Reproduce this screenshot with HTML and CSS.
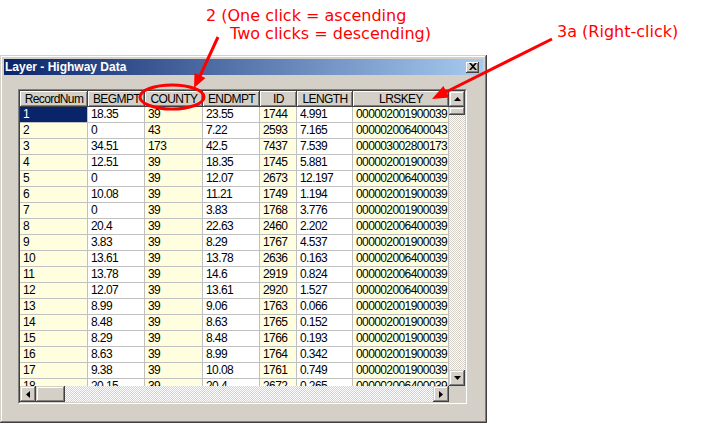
FILE: index.html
```html
<!DOCTYPE html>
<html>
<head>
<meta charset="utf-8">
<link rel="stylesheet" href="styles.css">
</head>
<body>
<div class="stage">
  <div class="window">
    <div class="titlebar">
      <span class="title">Layer - Highway Data</span>
      <span class="close"><svg width="8" height="7" viewBox="0 0 8 7"><path d="M0 0h2l2 2 2-2h2L5 3.5 8 7H6L4 5 2 7H0l3-3.5z" fill="#000"/></svg></span>
    </div>
    <div class="client">
      <div class="grid">
        <div class="grid-in">
          <div class="top">
            <div class="data">
              <div class="row head">
                <div class="hc">RecordNum</div><div class="hc">BEGMPT</div><div class="hc">COUNTY</div><div class="hc">ENDMPT</div><div class="hc">ID</div><div class="hc">LENGTH</div><div class="hc">LRSKEY</div>
              </div>
              <div class="row"><div class="c y sel">1</div><div class="c">18.35</div><div class="c y">39</div><div class="c">23.55</div><div class="c y">1744</div><div class="c">4.991</div><div class="c y">000002001900039</div></div>
              <div class="row"><div class="c y">2</div><div class="c">0</div><div class="c y">43</div><div class="c">7.22</div><div class="c y">2593</div><div class="c">7.165</div><div class="c y">000002006400043</div></div>
              <div class="row"><div class="c y">3</div><div class="c">34.51</div><div class="c y">173</div><div class="c">42.5</div><div class="c y">7437</div><div class="c">7.539</div><div class="c y">000003002800173</div></div>
              <div class="row"><div class="c y">4</div><div class="c">12.51</div><div class="c y">39</div><div class="c">18.35</div><div class="c y">1745</div><div class="c">5.881</div><div class="c y">000002001900039</div></div>
              <div class="row"><div class="c y">5</div><div class="c">0</div><div class="c y">39</div><div class="c">12.07</div><div class="c y">2673</div><div class="c">12.197</div><div class="c y">000002006400039</div></div>
              <div class="row"><div class="c y">6</div><div class="c">10.08</div><div class="c y">39</div><div class="c">11.21</div><div class="c y">1749</div><div class="c">1.194</div><div class="c y">000002001900039</div></div>
              <div class="row"><div class="c y">7</div><div class="c">0</div><div class="c y">39</div><div class="c">3.83</div><div class="c y">1768</div><div class="c">3.776</div><div class="c y">000002001900039</div></div>
              <div class="row"><div class="c y">8</div><div class="c">20.4</div><div class="c y">39</div><div class="c">22.63</div><div class="c y">2460</div><div class="c">2.202</div><div class="c y">000002006400039</div></div>
              <div class="row"><div class="c y">9</div><div class="c">3.83</div><div class="c y">39</div><div class="c">8.29</div><div class="c y">1767</div><div class="c">4.537</div><div class="c y">000002001900039</div></div>
              <div class="row"><div class="c y">10</div><div class="c">13.61</div><div class="c y">39</div><div class="c">13.78</div><div class="c y">2636</div><div class="c">0.163</div><div class="c y">000002006400039</div></div>
              <div class="row"><div class="c y">11</div><div class="c">13.78</div><div class="c y">39</div><div class="c">14.6</div><div class="c y">2919</div><div class="c">0.824</div><div class="c y">000002006400039</div></div>
              <div class="row"><div class="c y">12</div><div class="c">12.07</div><div class="c y">39</div><div class="c">13.61</div><div class="c y">2920</div><div class="c">1.527</div><div class="c y">000002006400039</div></div>
              <div class="row"><div class="c y">13</div><div class="c">8.99</div><div class="c y">39</div><div class="c">9.06</div><div class="c y">1763</div><div class="c">0.066</div><div class="c y">000002001900039</div></div>
              <div class="row"><div class="c y">14</div><div class="c">8.48</div><div class="c y">39</div><div class="c">8.63</div><div class="c y">1765</div><div class="c">0.152</div><div class="c y">000002001900039</div></div>
              <div class="row"><div class="c y">15</div><div class="c">8.29</div><div class="c y">39</div><div class="c">8.48</div><div class="c y">1766</div><div class="c">0.193</div><div class="c y">000002001900039</div></div>
              <div class="row"><div class="c y">16</div><div class="c">8.63</div><div class="c y">39</div><div class="c">8.99</div><div class="c y">1764</div><div class="c">0.342</div><div class="c y">000002001900039</div></div>
              <div class="row"><div class="c y">17</div><div class="c">9.38</div><div class="c y">39</div><div class="c">10.08</div><div class="c y">1761</div><div class="c">0.749</div><div class="c y">000002001900039</div></div>
              <div class="row"><div class="c y">18</div><div class="c">20.15</div><div class="c y">39</div><div class="c">20.4</div><div class="c y">2672</div><div class="c">0.265</div><div class="c y">000002006400039</div></div>
            </div>
            <div class="vscroll">
              <div class="btn"><svg width="7" height="4" viewBox="0 0 7 4"><path d="M3.5 0L7 4H0z" fill="#000"/></svg></div>
              <div class="thumb-v"></div>
              <div class="track"></div>
              <div class="btn"><svg width="7" height="4" viewBox="0 0 7 4"><path d="M0 0h7L3.5 4z" fill="#000"/></svg></div>
            </div>
          </div>
          <div class="bottom">
            <div class="hscroll">
              <div class="btn"><svg width="4" height="7" viewBox="0 0 4 7"><path d="M4 0v7L0 3.5z" fill="#000"/></svg></div>
              <div class="thumb-h"></div>
              <div class="track"></div>
              <div class="btn"><svg width="4" height="7" viewBox="0 0 4 7"><path d="M0 0l4 3.5L0 7z" fill="#000"/></svg></div>
            </div>
            <div class="corner"></div>
          </div>
        </div>
      </div>
    </div>
  </div>

  <div class="overlay">
    <svg class="marks" width="703" height="424" viewBox="0 0 703 424">
      <ellipse cx="172" cy="97" rx="32" ry="12" fill="none" stroke="#ff0000" stroke-width="3"/>
      <line x1="218" y1="37" x2="200" y2="76" stroke="#ff0000" stroke-width="3"/>
      <polygon points="194,88 205.4,77.9 194.5,72.8" fill="#ff0000"/>
      <line x1="552" y1="39" x2="446" y2="92" stroke="#ff0000" stroke-width="3"/>
      <polygon points="432,99 449.2,97.6 443.4,86" fill="#ff0000"/>
    </svg>
    <div class="callout c1">
      <span class="l1">2 (One click = ascending</span>
      <span class="l2">Two clicks = descending)</span>
    </div>
    <div class="callout c2">3a (Right-click)</div>
  </div>
</div>
</body>
</html>
```

FILE: styles.css
```css
html, body {
  margin: 0;
  padding: 0;
  background: #ffffff;
}

.stage {
  position: relative;
  width: 703px;
  height: 424px;
  overflow: hidden;
  background: #ffffff;
  font-family: "Liberation Sans", Arial, sans-serif;
}

.window {
  box-sizing: border-box;
  width: 487px;
  height: 368px;
  margin-top: 55px;
  padding: 4px;
  background: #d4d0c8;
  box-shadow: inset -1px -1px #404040, inset 1px 1px #d4d0c8, inset -2px -2px #808080, inset 2px 2px #ffffff;
  display: flex;
  flex-direction: column;
}

.titlebar {
  height: 16px;
  flex: none;
  background: linear-gradient(to right, #0a246a, #a6caf0);
  display: flex;
  align-items: center;
  justify-content: space-between;
  padding: 0 4px 0 1px;
}

.title {
  color: #ffffff;
  font: bold 12px "Liberation Sans", Arial, sans-serif;
  line-height: 16px;
  white-space: nowrap;
}

.close {
  box-sizing: border-box;
  width: 13px;
  height: 11px;
  background: #d4d0c8;
  box-shadow: inset -1px -1px #404040, inset 1px 1px #ffffff, inset -2px -2px #808080;
  display: flex;
  align-items: center;
  justify-content: center;
  padding-bottom: 1px;
}

.client {
  flex: 1;
  padding: 14px 16px 15px 14px;
}

.grid {
  box-sizing: border-box;
  width: 449px;
  height: 315px;
  border: 1px solid;
  border-color: #808080 #ffffff #ffffff #808080;
}

.grid-in {
  box-sizing: border-box;
  height: 100%;
  border: 1px solid;
  border-color: #404040 #d4d0c8 #d4d0c8 #404040;
  display: flex;
  flex-direction: column;
  background: #ffffff;
}

.top {
  display: flex;
  height: 295px;
}

.data {
  width: 429px;
  height: 295px;
  overflow: hidden;
  font-size: 12px;
  letter-spacing: -0.6px;
  color: #000000;
}

.row {
  display: grid;
  grid-template-columns: 68px 57px 58px 57px 37px 56px 96px;
  height: 16px;
}

.hc {
  background: #d4d0c8;
  box-shadow: inset -1px -1px #404040, inset 1px 1px #ffffff, inset -2px -2px #808080;
  text-align: center;
  line-height: 16px;
  white-space: nowrap;
  overflow: hidden;
}

.c {
  box-sizing: border-box;
  background: #ffffff;
  border-right: 1px solid #c0c0c0;
  border-bottom: 1px solid #c0c0c0;
  padding-left: 3px;
  line-height: 15px;
  white-space: nowrap;
  overflow: hidden;
}

.c.y {
  background: #ffffe0;
}

.c.sel {
  background: #0a246a;
  color: #ffffff;
}

.vscroll {
  width: 16px;
  display: flex;
  flex-direction: column;
}

.bottom {
  display: flex;
  height: 16px;
}

.hscroll {
  width: 429px;
  display: flex;
}

.corner {
  width: 16px;
  background: #d4d0c8;
}

.btn {
  box-sizing: border-box;
  width: 16px;
  height: 16px;
  flex: none;
  background: #d4d0c8;
  box-shadow: inset -1px -1px #404040, inset 1px 1px #d4d0c8, inset -2px -2px #808080, inset 2px 2px #ffffff;
  display: flex;
  align-items: center;
  justify-content: center;
}

.btn svg {
  display: block;
}

.thumb-v {
  height: 8px;
  flex: none;
  background: #d4d0c8;
  box-shadow: inset -1px -1px #404040, inset 1px 1px #d4d0c8, inset -2px -2px #808080, inset 2px 2px #ffffff;
}

.thumb-h {
  width: 29px;
  flex: none;
  background: #d4d0c8;
  box-shadow: inset -1px -1px #404040, inset 1px 1px #d4d0c8, inset -2px -2px #808080, inset 2px 2px #ffffff;
}

.track {
  flex: 1;
  background-image: repeating-conic-gradient(#ffffff 0% 25%, #d4d0c8 0% 50%);
  background-size: 2px 2px;
}

.overlay {
  position: absolute;
  left: 0;
  top: 0;
  width: 703px;
  height: 424px;
  pointer-events: none;
}

.marks {
  position: absolute;
  left: 0;
  top: 0;
}

.callout {
  position: absolute;
  color: #ff0000;
  font: 16px "DejaVu Sans", Verdana, sans-serif;
  line-height: 18px;
  white-space: nowrap;
}

.c1 {
  left: 206px;
  top: 7px;
}

.c1 span {
  display: block;
}

.c1 .l2 {
  padding-left: 24px;
}

.c2 {
  left: 557px;
  top: 23px;
}
```
